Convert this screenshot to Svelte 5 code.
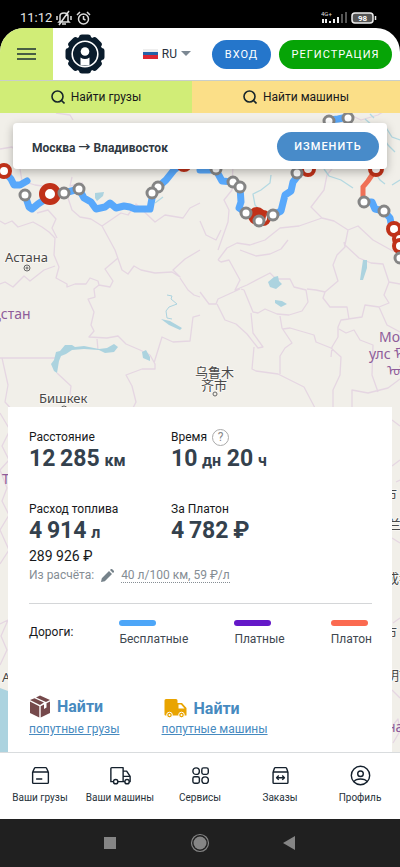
<script>
  const borders = [
    'M0 149 12 147 17 152M56 113 70 115 73 120M20 169 22 181 35 185 50 187 67 195M72 177 70 186 83 183',
    'M0 221 5 224 12 221 18 227 33 222 42 227 49 232 55 238 54 255 59 267 56 278 67 284 67 287 75 284 86 284 90 278 98 281 99 285 110 287 113 281 105 269 118 258',
    'M37 213 48 210 56 219 52 228 57 238M67 195 72 210 80 217 91 219 102 226 115 250 122 270 128 274 134 266 141 270 155 273 172 272 180 277 173 270 185 259 200 250',
    'M102 226 121 213 128 215 136 204 155 222 165 215 183 218 190 208 200 203',
    'M0 284 5 282 13 287 24 276 30 281 44 270 55 266M99 285 94 289 95 297 88 299 94 312 91 325 94 331 89 337 107 338 118 336 126 344 140 350 150 355',
    'M97 339 98 350M0 358 55 358M2 358 8 385 5 402 14 412M57 373 71 386 70 395 80 398M150 355 155 364 155 369 142 369 126 375 132 386 136 402 132 410M154 363 162 337 173 342 190 341 193 317 200 315',
    'M180 278 188 290 194 295 200 297M0 413 10 430 2 446 9 460 0 470 7 488 2 501 9 515 0 530 9 550 0 564M0 624 8 620 1 636 7 650 0 665',
    'M226 140 233 164 232 190 224 200 229 210 228 222 218 250M200 221 206 235 216 240 221 230M240 250 256 256 270 254 281 249 288 240M218 260 221 262 229 260 240 280 235 290 247 285 270 273 276 279 290 279 294 287 306 290 308 302 302 311 289 315 277 314 265 309 258 313 253 312 244 290 241 289',
    'M218 260 227 248 237 243 250 245 265 240 280 228 299 226 322 218 311 207 324 190 327 175 335 165M200 292 209 304 216 304 218 299 229 294 240 289M217 304 225 320 236 324 247 334 258 348 263 347 253 333 251 313',
    'M254 347 252 369 256 371 278 374 304 387 315 408M280 374 280 356 285 348 292 343 282 328 280 316M283 329 290 328 314 335 316 342 331 348 341 357 340 375 333 390 333 408',
    'M307 289 316 290 325 292 338 281 333 265 337 255 345 247 344 242M325 292 323 298 330 307 347 307 349 319 341 320 338 327 338 337 332 347 331 357',
    'M322 218 334 221 348 230 345 245 359 258 371 263 383 264 389 282 400 284M389 282 384 295 389 303 379 307 365 305 362 317 348 319M379 307 387 325 400 332M339 329 346 333 354 330 360 340 373 345 372 375 378 392',
    'M352 408 352 390 368 393 388 388 400 379M348 230 358 226 373 240 391 250 400 254M340 110 361 120 378 115 386 110',
    'M392 420 400 426M392 466 400 460M396 482 400 480M392 538 400 543M393 623 400 618M392 690 400 698M393 725 398 719 400 731 393 743'
  ];

  const rivers = 'M271 175 270 183 261 190 253 194 255 205 262 213M324 169 329 176 341 180 353 188M365 119 372 125 385 126 392 137 400 140M370 114 374 118M378 128 388 145 395 152M374 171 380 180 385 184M392 185 400 180M155 203 163 197';

  const lakes = [
    'M51 364 54 360 56 352 60 351 65 345 72 345 75 347 84 346 99 349 107 348 114 344 118 347 114 352 105 353 99 350 84 349 72 350 66 354 61 356 59 361 57 373 54 371Z',
    'M142 352 146 350 150 357 150 361 143 358Z',
    'M161 319 170 321 182 328 180 330 169 325Z',
    'M268 282 274 277 278 276 279 281 282 284 276 289 270 287Z',
    'M275 300 282 301 287 304 281 307 275 303Z',
    'M363 260 367 260 367 268 363 280 360 280Z',
    'M95 193 104 192 103 196 97 201 95 198Z',
    'M0 688 8 691 8 752 0 752Z'
  ];

  const roads = [
    'M4 171 11 179 14 185 20 185 27 181M25 195 29 207 32 209 38 204 50 196 64 193 79 189 84 198 91 202 96 209 105 207 110 203 116 208 124 206 130 207 135 209 150 209 153 193 158 187 166 180 174 170 184 162',
    'M200 170 216 170 222 181 233 182 240 187 241 202 239 208 246 213 258 219 273 215 281 211 285 195 291 191 293 182 300 173 308 169M329 120 338 119 348 117',
    'M364 202 372 202 375 209 384 211 390 218 392 228 400 243'
  ];

  const small = [[25, 195], [64, 193], [79, 189], [158, 187], [152, 193], [216, 169], [233, 182], [240, 187], [246, 213], [273, 215], [297, 173], [329, 121], [348, 118], [364, 202], [384, 211]];
  const red = [[4, 171], [184, 164], [308, 169], [376, 169], [394, 229], [400, 239], [263, 218]];

  const legend = [
    { name: 'Бесплатные', color: '#4da6f8' },
    { name: 'Платные', color: '#6418c8' },
    { name: 'Платон', color: '#fb6a50' }
  ];

  const tabs = ['Найти грузы', 'Найти машины'];
</script>

<div class="app">
  <div class="status">
    <span class="clock">11:12</span>
    <svg width="16" height="16" viewBox="0 0 16 16" fill="none" stroke="#ddd" stroke-width="1.5"><path d="M4 11V6q0-3 4-3t4 3v5l1 1H3zM6 14h4M13 1 3 15M1 6v4M15 6v4" /></svg>
    <svg width="15" height="15" viewBox="0 0 15 15" fill="none" stroke="#ddd" stroke-width="1.5"><circle cx="7.500" cy="8" r="5" /><path d="M7.500 5v3l2 1M1 4l3-3M14 4l-3-3" /></svg>
    <svg class="signal" width="26" height="14" viewBox="0 0 26 14"><text x="0" y="5" font-size="6" fill="#ddd">4G+</text><path d="M2 8v4M5 8v4M9 10v2M13 8v4M17 6v6" stroke="#eee" stroke-width="2" /><path d="M21 3v9M25 1v11" stroke="#555" stroke-width="2" /></svg>
    <svg width="26" height="12" viewBox="0 0 26 12"><rect x="1" y="1" width="21" height="10" rx="3" fill="#555" stroke="#eee" stroke-width="1.500" /><path d="M24.500 4v4" stroke="#eee" stroke-width="1.500" /><text x="11.500" y="9" font-size="8" font-weight="700" text-anchor="middle" fill="#fff">98</text></svg>
  </div>

  <header>
    <button class="menu" aria-label="Меню"><svg width="20" height="12" viewBox="0 0 20 12" stroke="#1c3035" stroke-width="1.6"><path d="M0 1h19M0 6h19M0 11h19" /></svg></button>
    <a class="logo" href="#home" aria-label="Главная">
      <svg width="40" height="40" viewBox="0 0 40 40">
        <circle cx="20" cy="20" r="17.800" fill="#0a1c2c" />
        <g fill="#0a1c2c">
          {#each [0, 45, 90, 135, 180, 225, 270, 315] as turn}
            <rect x="14" y=".5" width="12" height="8" rx="3" transform="rotate({turn} 20 20)" />
          {/each}
        </g>
        <circle cx="20" cy="20" r="12.800" fill="none" stroke="#fff" stroke-width="1.600" />
        <circle cx="20" cy="17.500" r="4.300" fill="#fff" /><path d="M15.500 31.500V23.500q4.500 3 9 0v8z" fill="#fff" />
      </svg>
    </a>
    <button class="lang"><svg width="15" height="10" viewBox="0 0 15 10"><path fill="#eee" d="M0 0h15v4H0z" /><path fill="#2462a8" d="M0 3h15v4H0z" /><path fill="#dc2733" d="M0 6h15v4H0z" /></svg><span>RU</span><svg width="10" height="6" viewBox="0 0 10 6"><path d="M0 0h10L5 5z" fill="#7c8893" /></svg></button>
    <button class="pill login">ВХОД</button>
    <button class="pill register">РЕГИСТРАЦИЯ</button>
  </header>

  <nav class="tabs">
    {#each tabs as tab}
      <a href="#search"><svg width="14" height="14" viewBox="0 0 14 14" fill="none" stroke="#17262b" stroke-width="1.600"><circle cx="6.500" cy="6.500" r="5.500" /><path d="m10 10 3.500 3.500" /></svg>{tab}</a>
    {/each}
  </nav>

  <main>
    <svg class="map" viewBox="0 113 400 639" preserveAspectRatio="xMidYMin slice" aria-hidden="true">
      <path fill="none" stroke="#e5d6e2" stroke-width="1.300" stroke-linejoin="round" d={borders.join('')} />
      <path fill="none" stroke="#b4d9e2" stroke-width="1.300" d={rivers} />
      <path fill="#acd3df" d={lakes.join('')} />
      <path d="m167 295 5 1-1 3 6 5-8 3-3 4 1 7 5 1" fill="none" stroke="#acd3df" />
      <g fill="none" stroke="#666"><circle cx="27" cy="268" r="3" /><circle cx="27" cy="268" r="1" /><circle cx="64" cy="409" r="3" /><circle cx="215" cy="394" r="2" /></g>
      <g class="place">
        <text x="5" y="262">Астана</text>
        <text x="39" y="403">Бишкек</text>
        <text x="195" y="377">乌鲁木</text>
        <text x="201" y="390">齐市</text>
        <text x="384" y="499">市</text>
        <text x="388" y="529">兰州</text>
        <text x="386" y="583">成都</text>
        <text x="384" y="637">市</text>
        <text x="386" y="680">明市</text>
        <text x="2" y="682">А</text>
      </g>
      <g class="country">
        <text x="-7" y="319">қстан</text>
        <text x="379" y="342">Монгол</text>
        <text x="369" y="359">улс ᠮᠣᠩ</text>
        <text x="387" y="376">ᠤᠯᠤᠰ</text>
        <text x="2" y="484">Т</text>
        <text x="387" y="732">на</text>
      </g>

      <path d={roads.join('')} fill="none" stroke="#58a8fb" stroke-width="7" stroke-linejoin="round" stroke-linecap="round" />
      <path d="M374 172 368 181 363 187 363 197" fill="none" stroke="#f07056" stroke-width="5" />
      <g fill="#fff" stroke="#c03119" stroke-width="4">
        {#each red as [cx, cy]}<circle {cx} {cy} r="6" />{/each}
        <circle cx="400" cy="246" r="6" />
        <circle cx="257" cy="216" r="7" fill="#c03119" />
        <circle cx="50" cy="194" r="8" stroke-width="6" />
      </g>
      <g fill="#fff" stroke="#858585" stroke-width="3">
        {#each small as [cx, cy]}<circle {cx} {cy} r="5" />{/each}
        <circle cx="259" cy="221" r="5" />
        <circle cx="400" cy="258" r="5" />
      </g>
    </svg>

    <section class="route">
      <strong>Москва → Владивосток</strong>
      <button class="pill">ИЗМЕНИТЬ</button>
    </section>

    <section class="panel">
      <div class="stats">
        <div class="stat">
          <span>Расстояние</span>
          <b>12&thinsp;285&thinsp;<small>км</small></b>
        </div>
        <div class="stat">
          <span>Время <button class="help" aria-label="Подсказка">?</button></span>
          <b>10&thinsp;<small>дн</small> 20&thinsp;<small>ч</small></b>
        </div>
        <div class="stat">
          <span>Расход топлива</span>
          <b>4&thinsp;914&thinsp;<small>л</small></b>
        </div>
        <div class="stat">
          <span>За Платон</span>
          <b>4&thinsp;782&thinsp;₽</b>
        </div>
      </div>
      <div class="cost">289 926 ₽</div>
      <div class="basis">Из расчёта:
        <svg width="13" height="13" viewBox="0 0 13 13" fill="#76828a"><path d="m0 13 .8-3.800L8 2l3 3-7.200 7.200zM9 1l1-1h1l2 2v1l-1 1z" /></svg>
        <a href="#fuel">40 л/100 км, 59 ₽/л</a>
      </div>

      <div class="legend">
        <span class="title">Дороги:</span>
        {#each legend as road}
          <span class="road"><i style="background: {road.color}"></i>{road.name}</span>
        {/each}
      </div>

      <div class="finds">
        <a href="#cargo">
          <span><svg width="22" height="24" viewBox="0 0 22 24" fill="#75494b"><path d="M1 6 5.500 4.200 15 8.500 11 11zM7 3.500 11 1.500 21 6 17 8zM1 7.500 10.300 12.200V23.500L1 19zM11.700 12.200 15 10.500V15L17.500 13.500V9.300L21 7.500V19L11.700 23.500z" /></svg><b>Найти</b></span>
          <em>попутные грузы</em>
        </a>
        <a href="#trucks">
          <span class="low"><svg width="26" height="20" viewBox="0 0 26 20"><path d="M2.500 2.500q0-1.500 1.500-1.500h10q1.500 0 1.500 1.500V5H20l4.500 5v7.500H3.500q-1 0-1-1z" fill="#e9a400" /><path d="M16.500 6.500h2.500l3.500 4h-6z" fill="#fff" /><g fill="#e9a400" stroke="#fff" stroke-width="1"><circle cx="7.500" cy="17" r="2.800" /><circle cx="19.500" cy="17" r="2.800" /></g><circle cx="7.500" cy="17" r="1" fill="#fff" /><circle cx="19.500" cy="17" r="1" fill="#fff" /></svg><b>Найти</b></span>
          <em>попутные машины</em>
        </a>
      </div>
    </section>
  </main>

  <nav class="bottom">
    <a href="#my-cargo"><svg viewBox="0 0 24 24"><path d="M3 8v12q0 1 1 1h16q1 0 1-1V8zM3 8l2-4q0-1 1-1h12q1 0 1 1l2 4M7 16h7" /></svg>Ваши грузы</a>
    <a href="#my-trucks"><svg viewBox="0 0 24 24"><path d="M4 19H1V4q0-1 1-1h13v16H9M15 7h4l4 6v6h-1M17 19h-2M15 13h8" /><circle cx="6.500" cy="19" r="2.500" /><circle cx="19.500" cy="19" r="2.500" /></svg>Ваши машины</a>
    <a href="#services"><svg viewBox="0 0 24 24"><circle cx="7" cy="7" r="3.700" /><rect x="13.500" y="3.300" width="7.400" height="7.400" rx="2" /><rect x="3.300" y="13.500" width="7.400" height="7.400" rx="2" /><circle cx="17.300" cy="17.300" r="3.700" /></svg>Сервисы</a>
    <a href="#orders"><svg viewBox="0 0 24 24"><path d="M3.500 8v12q0 1 1 1h15q1 0 1-1V8zM3.500 8 5 4q0-1 1-1h12q1 0 1 1l1.500 4M7.500 14.500h9M10 12l-2.500 2.500L10 17M14 12l2.500 2.500L14 17" /></svg>Заказы</a>
    <a href="#profile"><svg viewBox="0 0 24 24"><circle cx="12" cy="12" r="10.500" /><circle cx="12" cy="10" r="3.200" /><path d="M4.500 19q2-3 7.500-3t7.500 3" /></svg>Профиль</a>
  </nav>

  <div class="system">
    <button aria-label="Недавние"><svg width="24" height="24" viewBox="0 0 24 24"><path d="M6 6h12v12H6z" fill="#858585" /></svg></button>
    <button aria-label="Домой"><svg width="24" height="24" viewBox="0 0 24 24"><circle cx="12" cy="12" r="8.500" fill="none" stroke="#858585" stroke-width="1.200" /><circle cx="12" cy="12" r="6.500" fill="#858585" /></svg></button>
    <button aria-label="Назад"><svg width="24" height="24" viewBox="0 0 24 24"><path d="M17 5v14L5 12z" fill="#858585" /></svg></button>
  </div>
</div>

<style>
  :global(body) { margin: 0; background: #000; }
  .app { min-height: 100vh; display: flex; flex-direction: column; font-family: Roboto, "Noto Sans", "Noto Sans CJK SC", sans-serif; font-size: 12px; color: #17191b; background: #000; }
  .app * { box-sizing: border-box; }
  button { border: 0; padding: 0; background: none; font: inherit; color: inherit; cursor: pointer; }
  a { color: inherit; text-decoration: none; }
  svg { display: block; flex: none; }

  .status { height: 28px; padding: 8px 23px 0 20px; display: flex; align-items: center; gap: 4px; color: #e5e5e5; }
  .clock { font-size: 13px; line-height: 16px; }
  .signal { margin-left: auto; }

  header { height: 53px; display: flex; align-items: center; background: #fff; border-radius: 24px 24px 0 0; overflow: hidden; border-bottom: 1px solid #c9ceca; padding-right: 8px; }
  .menu { width: 53px; height: 53px; display: grid; place-items: center; background: #d1ed77; }
  .logo { margin-left: 12px; }
  .lang { display: flex; align-items: center; gap: 4px; margin-left: auto; margin-right: 21px; color: #29313d; }
  .pill { height: 29px; border-radius: 16px; color: #fff; font-size: 11px; line-height: 29px; letter-spacing: 1px; }
  .login { width: 59px; background: #2576cb; margin-right: 8px; }
  .register { width: 113px; background: #06a406; }

  .tabs { display: grid; grid-template-columns: 12fr 13fr; height: 32px; }
  .tabs a { display: flex; align-items: center; justify-content: center; gap: 6px; background: #d1ed77; }
  .tabs a + a { background: #fbdf88; }

  main { position: relative; flex: 1; background: #f1efe9; padding: 10px 8px 0; display: flex; flex-direction: column; overflow: hidden; }
  .map { position: absolute; inset: 0; width: 100%; height: 100%; }
  .place { font: 13px "Noto Sans", "Noto Sans CJK SC", sans-serif; fill: #484848; stroke: #f8f6f2; stroke-width: 2px; paint-order: stroke; }
  .country { font: 14px "Noto Sans", sans-serif; fill: #8e5c9a; }
  .route { position: relative; margin: 0 5px; height: 46px; padding: 0 8px 0 19px; display: flex; align-items: center; justify-content: space-between; background: #fff; border-radius: 4px; box-shadow: 0 3px 10px #0004; color: #303942; }
  .route .pill { width: 102px; background: #488bc9; font-weight: 500; }

  .panel { position: relative; margin-top: auto; min-height: 345px; padding: 21px 20px 0 21px; background: #fff; }
  .stats { display: grid; grid-template-columns: 142px 1fr; row-gap: 26px; }
  .stat span { display: flex; align-items: center; gap: 5px; line-height: 18px; height: 18px; }
  .stat b { display: block; font-size: 23px; line-height: 26px; color: #34414d; white-space: nowrap; }
  .stat small { font-size: 16px; }
  .help { width: 17px; height: 17px; border: 1px solid #aaa; border-radius: 50%; color: #888; line-height: 15px; }
  .cost { font-size: 14px; line-height: 20px; }
  .basis { display: flex; align-items: center; gap: 7px; line-height: 18px; color: #858d94; }
  .basis a { border-bottom: 1px dotted; line-height: 14px; }
  .legend { display: flex; justify-content: space-between; margin-top: 19px; padding-top: 16px; border-top: 1px solid #d4d6d8; }
  .title { line-height: 24px; }
  .road { display: flex; flex-direction: column; gap: 5px; line-height: 16px; color: #404850; }
  .road i { width: 37px; height: 6px; border-radius: 3px; }
  .finds { display: flex; gap: 42px; margin-top: 46px; color: #478abf; }
  .finds span { display: flex; align-items: center; gap: 6px; height: 26px; font-size: 16px; }
  .finds .low { padding-top: 4px; }
  .finds em { display: block; font-style: normal; line-height: 20px; text-decoration: underline; }

  .bottom { height: 67px; display: grid; grid-template-columns: repeat(5, 1fr); padding-top: 12px; background: #fff; border-top: 1px solid #d9dcde; font-size: 10px; line-height: 16px; color: #27323a; }
  .bottom a { display: flex; flex-direction: column; align-items: center; gap: 4px; }
  .bottom svg { width: 21px; height: 21px; fill: none; stroke: #14202c; stroke-width: 1.6; stroke-linejoin: round; }
  .system { height: 48px; padding: 0 98px; display: flex; align-items: center; justify-content: space-between; background: #202020; }
</style>
